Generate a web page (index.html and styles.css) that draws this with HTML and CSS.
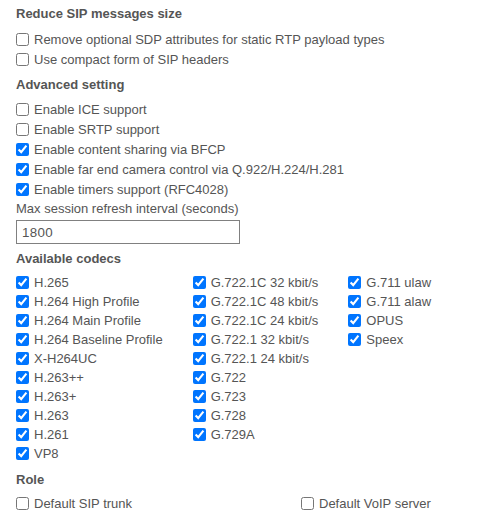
FILE: index.html
```html
<!DOCTYPE html>
<html>
<head>
<meta charset="utf-8">
<link rel="stylesheet" href="styles.css">
</head>
<body>
<div class="form">
  <div class="heading first">Reduce SIP messages size</div>
  <label class="row"><input type="checkbox"><span>Remove optional SDP attributes for static RTP payload types</span></label>
  <label class="row"><input type="checkbox"><span>Use compact form of SIP headers</span></label>

  <div class="heading">Advanced setting</div>
  <label class="row"><input type="checkbox"><span>Enable ICE support</span></label>
  <label class="row"><input type="checkbox"><span>Enable SRTP support</span></label>
  <label class="row"><input type="checkbox" checked><span>Enable content sharing via BFCP</span></label>
  <label class="row"><input type="checkbox" checked><span>Enable far end camera control via Q.922/H.224/H.281</span></label>
  <label class="row"><input type="checkbox" checked><span>Enable timers support (RFC4028)</span></label>
  <div class="field-label">Max session refresh interval (seconds)</div>
  <input class="text-input" type="text" value="1800">

  <div class="heading codec-h">Available codecs</div>
  <div class="codecs">
    <div class="col">
      <label class="crow"><input type="checkbox" checked><span>H.265</span></label>
      <label class="crow"><input type="checkbox" checked><span>H.264 High Profile</span></label>
      <label class="crow"><input type="checkbox" checked><span>H.264 Main Profile</span></label>
      <label class="crow"><input type="checkbox" checked><span>H.264 Baseline Profile</span></label>
      <label class="crow"><input type="checkbox" checked><span>X-H264UC</span></label>
      <label class="crow"><input type="checkbox" checked><span>H.263++</span></label>
      <label class="crow"><input type="checkbox" checked><span>H.263+</span></label>
      <label class="crow"><input type="checkbox" checked><span>H.263</span></label>
      <label class="crow"><input type="checkbox" checked><span>H.261</span></label>
      <label class="crow"><input type="checkbox" checked><span>VP8</span></label>
    </div>
    <div class="col">
      <label class="crow"><input type="checkbox" checked><span>G.722.1C 32 kbit/s</span></label>
      <label class="crow"><input type="checkbox" checked><span>G.722.1C 48 kbit/s</span></label>
      <label class="crow"><input type="checkbox" checked><span>G.722.1C 24 kbit/s</span></label>
      <label class="crow"><input type="checkbox" checked><span>G.722.1 32 kbit/s</span></label>
      <label class="crow"><input type="checkbox" checked><span>G.722.1 24 kbit/s</span></label>
      <label class="crow"><input type="checkbox" checked><span>G.722</span></label>
      <label class="crow"><input type="checkbox" checked><span>G.723</span></label>
      <label class="crow"><input type="checkbox" checked><span>G.728</span></label>
      <label class="crow"><input type="checkbox" checked><span>G.729A</span></label>
    </div>
    <div class="col">
      <label class="crow"><input type="checkbox" checked><span>G.711 ulaw</span></label>
      <label class="crow"><input type="checkbox" checked><span>G.711 alaw</span></label>
      <label class="crow"><input type="checkbox" checked><span>OPUS</span></label>
      <label class="crow"><input type="checkbox" checked><span>Speex</span></label>
    </div>
  </div>

  <div class="heading role">Role</div>
  <div class="role-row">
    <label class="row"><input type="checkbox"><span>Default SIP trunk</span></label>
    <label class="row"><input type="checkbox"><span>Default VoIP server</span></label>
  </div>
</div>
</body>
</html>
```

FILE: styles.css
```css
html, body {
  margin: 0;
  padding: 0;
  background: #ffffff;
}
body {
  font-family: "Liberation Sans", Arial, sans-serif;
  font-size: 13px;
  color: #555555;
}
.form {
  padding: 0 16px;
}
.heading {
  font-weight: bold;
  height: 20px;
  line-height: 20px;
  margin: 6px 0 4px;
}
.heading.first {
  margin-top: 4px;
  margin-bottom: 5px;
}
.heading.codec-h {
  margin-top: 5px;
  margin-bottom: 4px;
}
.heading.role {
  margin-top: 7px;
  margin-bottom: 3px;
}
.row, .crow {
  display: flex;
  align-items: center;
  height: 20px;
  white-space: nowrap;
}
.crow {
  height: 19px;
}
.row input, .crow input {
  width: 13px;
  height: 13px;
  margin: 0 5px 0 0;
  flex: none;
}
.field-label {
  height: 20px;
  line-height: 20px;
}
.text-input {
  display: block;
  box-sizing: border-box;
  width: 224px;
  height: 24px;
  margin: 1px 0 0;
  padding: 0 5px;
  border: 1px solid #808080;
  border-radius: 0;
  font-family: "Liberation Sans", Arial, sans-serif;
  font-size: 13.33px;
  color: #555555;
  letter-spacing: 0.3px;
}
.codecs {
  display: flex;
  column-gap: 30px;
  margin-top: 0;
}
.col {
  display: flex;
  flex-direction: column;
}
.role-row {
  display: grid;
  grid-template-columns: 285px auto;
}
```
